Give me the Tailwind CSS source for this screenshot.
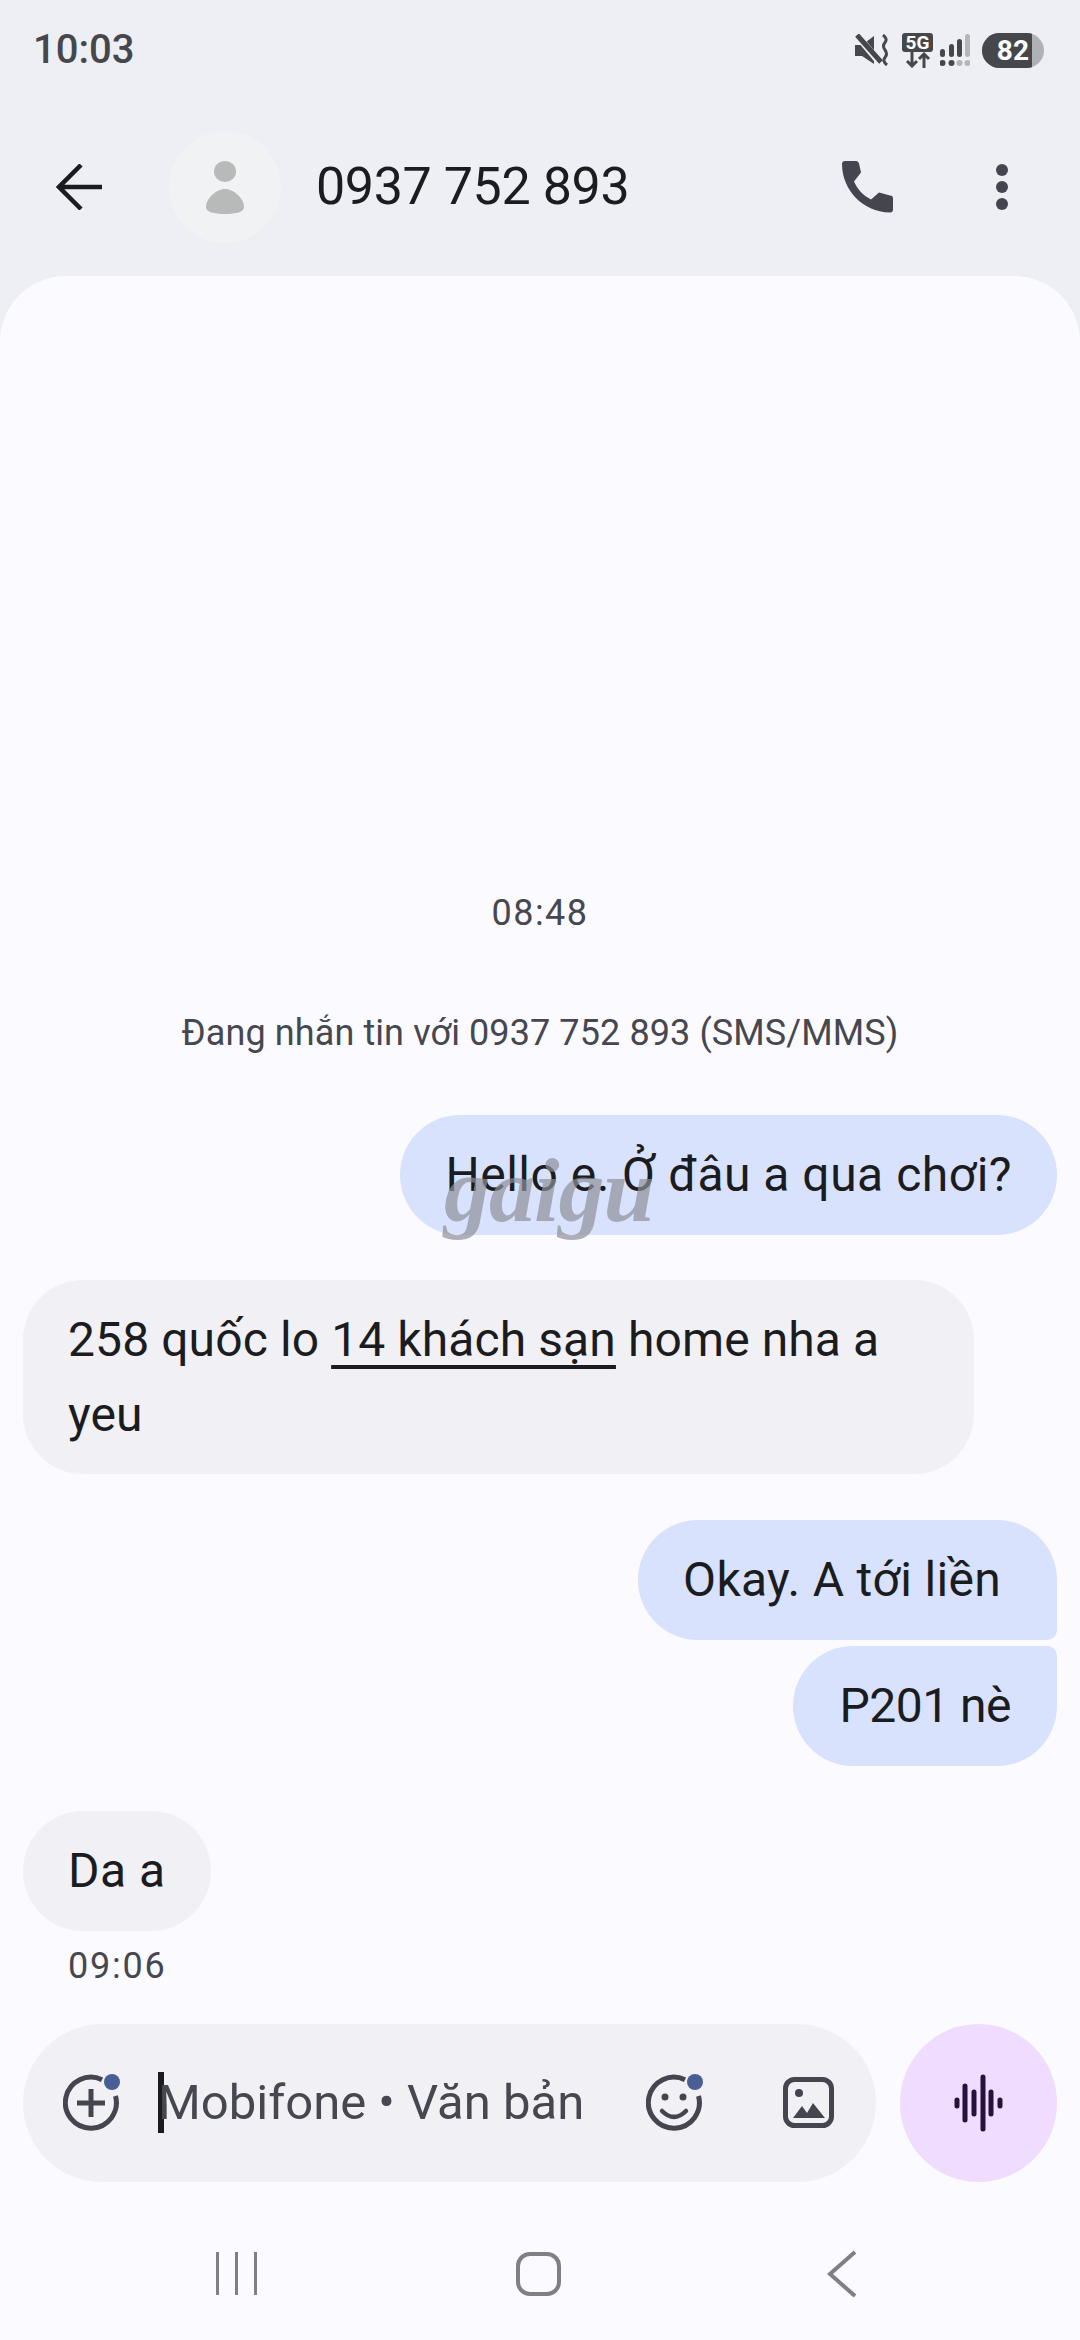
<!DOCTYPE html>
<html lang="vi">
<head>
  <meta charset="UTF-8" />
  <title>0937 752 893</title>
  <script src="https://cdn.jsdelivr.net/npm/@tailwindcss/browser@4"></script>
</head>
<body class="bg-[#eeeff4] text-[#1b1c20] font-['Roboto',sans-serif]">
<div class="w-[1080px] h-[2340px] flex flex-col overflow-hidden relative">

  <!-- Status bar -->
  <div class="h-[100px] pl-[33px] pr-[36px] flex items-center justify-between shrink-0">
    <span class="text-[40px] font-medium text-[#46474b]">10:03</span>
    <div class="flex items-center text-[#46474b]">
      <svg width="35" height="32" viewBox="0 0 35 32" fill="#46474b">
        <path d="M0 11h7L19 2v28L7 22H0z"/>
        <path d="M0 -1l26 31" stroke="#eeeff4" stroke-width="7"/>
        <path d="M2 1l24 27" stroke="#46474b" stroke-width="5"/>
        <path d="M28 1q5 4 2 7.500t0 7.500t0 7.500t2 7.500" fill="none" stroke="#46474b" stroke-width="3"/>
      </svg>
      <div class="flex flex-col items-center ml-[12px]">
        <div class="w-[31px] h-[19px] bg-[#46474b] rounded-[3px] text-white text-[19px] font-bold leading-[19px] text-center">5G</div>
        <svg width="26" height="16" viewBox="0 0 26 16" fill="none" stroke="#46474b" stroke-width="3"><path d="M7 0v14M2 9l5 5 5-5M19 16V2M14 7l5-5 5 5"/></svg>
      </div>
      <svg class="ml-[7px]" width="30" height="33" viewBox="0 0 30 33" fill="#46474b">
        <rect x="0" y="15" width="5" height="8" rx="2.500"/><rect x="9" y="10" width="5" height="13" rx="2.500"/><rect x="17" y="5" width="5" height="18" rx="2.500"/><rect x="25" y="0" width="5" height="23" rx="2.500" fill="#b5b6ba"/>
        <circle cx="2.500" cy="29" r="3"/><circle cx="11.500" cy="29" r="3"/><circle cx="19.500" cy="29" r="3" fill="#b5b6ba"/><circle cx="27.500" cy="29" r="3" fill="#b5b6ba"/>
      </svg>
      <div class="w-[62px] h-[35px] ml-[12px] rounded-full bg-[#b0b1b5] overflow-hidden flex">
        <div class="w-[50px] bg-[#46474b] text-white text-[28px] font-bold leading-[35px] text-right pr-[3px]">82</div>
      </div>
    </div>
  </div>

  <!-- Header -->
  <div class="h-[174px] mb-[2px] shrink-0 flex items-center pl-[56px] pr-[72px]">
    <svg width="46" height="46" viewBox="0 0 46 46" fill="none" stroke="#1b1c20" stroke-width="4.500"><path d="M46 23H3M25 1L3 23l22 22"/></svg>
    <div class="w-[112px] h-[112px] rounded-full bg-[#f1f2f3] ml-[67px] flex items-center justify-center">
      <svg width="38" height="53" viewBox="0 0 38 53" fill="#b8b9b9"><ellipse cx="19" cy="10.500" rx="11" ry="10.500"/><path d="M19 28C28 28 38 38 38 46C38 51 30 53 19 53C8 53 0 51 0 46C0 38 10 28 19 28z"/></svg>
    </div>
    <span class="ml-[35px] text-[52px] tracking-[-0.400px]">0937 752 893</span>
    <svg class="ml-auto" width="51" height="52" viewBox="0 0 51 52" fill="#44454f"><path d="M3 0h11a3 3 0 0 1 3 2.500l2 9-7 9c3 7 9 14 17 18l8-7 11 3a3 3 0 0 1 3 3v11a3 3 0 0 1-3 3C20 51 0 28 0 3a3 3 0 0 1 3-3z"/></svg>
    <div class="ml-[103px] w-[12px] flex flex-col gap-[5px]">
      <span class="w-[12px] h-[12px] rounded-full bg-[#44454f] block"></span>
      <span class="w-[12px] h-[12px] rounded-full bg-[#44454f] block"></span>
      <span class="w-[12px] h-[12px] rounded-full bg-[#44454f] block"></span>
    </div>
  </div>

  <!-- Conversation sheet -->
  <main class="flex-1 bg-[#fafaff] rounded-t-[66px] flex flex-col">
    <div class="flex-1 flex flex-col justify-end px-[23px] pb-[38px] text-[48px] leading-[60px]">
      <p class="text-center text-[36px] leading-[40px] tracking-[1.500px] text-[#46474f]">08:48</p>
      <p class="text-center text-[36px] leading-[40px] tracking-[0.100px] text-[#46474f] mt-[80px] mb-[62px]">Đang nhắn tin với 0937 752 893 (SMS/MMS)</p>

      <div class="self-end bg-[#d8e2fd] rounded-[60px] px-[45px] py-[30px] tracking-[0.500px]">Hello e. Ở đâu a qua chơi?</div>

      <div class="self-start mt-[45px] w-[951px] bg-[#f0f0f5] rounded-[60px] pl-[45px] pr-[40px] py-[22px] leading-[75px] tracking-[0.100px]">258 quốc lo <span class="underline underline-offset-[9px] decoration-4 [text-decoration-skip-ink:none]">14 khách sạn</span> home nha a yeu</div>

      <div class="self-end mt-[46px] bg-[#d8e2fd] rounded-[60px] rounded-br-[10px] pl-[45px] pr-[56px] py-[30px] tracking-[0.300px]">Okay. A tới liền</div>
      <div class="self-end mt-[6px] bg-[#d8e2fd] rounded-[60px] rounded-tr-[10px] px-[46px] py-[30px] tracking-[-0.500px]">P201 nè</div>

      <div class="self-start mt-[45px] bg-[#f0f0f5] rounded-[60px] px-[45px] py-[30px] tracking-[0.500px]">Da a</div>
      <p class="ml-[45px] mt-[15px] text-[36px] leading-[40px] tracking-[1.800px] text-[#46474f]">09:06</p>
    </div>

    <!-- Composer -->
    <div class="px-[23px] flex gap-[24px] h-[158px]">
      <div class="w-[853px] bg-[#f0f0f5] rounded-full flex items-center relative">
        <svg class="absolute left-[40px] top-[49px]" width="60" height="60" viewBox="0 0 60 60" fill="none" stroke="#44454f" stroke-width="5"><path d="M39 6.700A25.500 25.500 0 1 0 52.500 23"/><path d="M28 16v28M14 30h28"/><circle cx="49" cy="9" r="8" fill="#4a5e96" stroke="none"/></svg>
        <span class="absolute left-[135px] top-[48px] w-[6px] h-[61px] bg-[#1b1c20]"></span>
        <span class="absolute left-[135px] top-[50px] text-[49px] leading-[58px] text-[#46474f]">Mobifone • Văn bản</span>
        <svg class="absolute left-[623px] top-[49px]" width="60" height="60" viewBox="0 0 60 60" fill="none" stroke="#44454f" stroke-width="5"><path d="M39 6.700A25.500 25.500 0 1 0 52.500 23"/><path d="M16 38q12 12 24 0" stroke-linecap="round" stroke-width="4.500"/><circle cx="19" cy="24" r="3.500" fill="#44454f" stroke="none"/><circle cx="37" cy="24" r="3.500" fill="#44454f" stroke="none"/><circle cx="49" cy="9" r="8" fill="#4a5e96" stroke="none"/></svg>
        <svg class="absolute left-[760px] top-[53px]" width="51" height="51" viewBox="0 0 51 51" fill="none"><rect x="2.500" y="2.500" width="46" height="46" rx="9" stroke="#44454f" stroke-width="5"/><circle cx="16" cy="16" r="4" fill="#44454f"/><path d="M10 41l9-12 5 7 6-10 12 15z" fill="#44454f"/></svg>
      </div>
      <div class="w-[157px] bg-[#efdcff] rounded-full flex items-center justify-center">
        <svg width="51" height="58" viewBox="0 0 51 58" fill="none" stroke="#25123d" stroke-width="5" stroke-linecap="round"><path d="M4 26v6M12 12v34M21 18v22M30 3v52M38 18v22M47 26v6"/></svg>
      </div>
    </div>

    <!-- Nav bar -->
    <nav class="h-[158px] relative">
      <span class="absolute left-[216px] top-[70px] w-[3px] h-[43px] bg-[#808084]"></span>
      <span class="absolute left-[235px] top-[70px] w-[3px] h-[43px] bg-[#808084]"></span>
      <span class="absolute left-[254px] top-[70px] w-[3px] h-[43px] bg-[#808084]"></span>
      <span class="absolute left-[516px] top-[70px] w-[45px] h-[44px] border-[4px] border-[#808084] rounded-[14px]"></span>
      <svg class="absolute left-[826px] top-[68px]" width="32" height="48" viewBox="0 0 32 48" fill="none" stroke="#808084" stroke-width="4"><path d="M29 2L4 24l25 22"/></svg>
    </nav>
  </main>

  <!-- Watermark -->
  <span class="absolute left-[444px] top-[1140px] text-[92px] leading-[100px] italic font-bold font-['Liberation_Serif',serif] text-[#8e9098]/70 tracking-[-1px]">gaigu</span>
</div>
</body>
</html>
